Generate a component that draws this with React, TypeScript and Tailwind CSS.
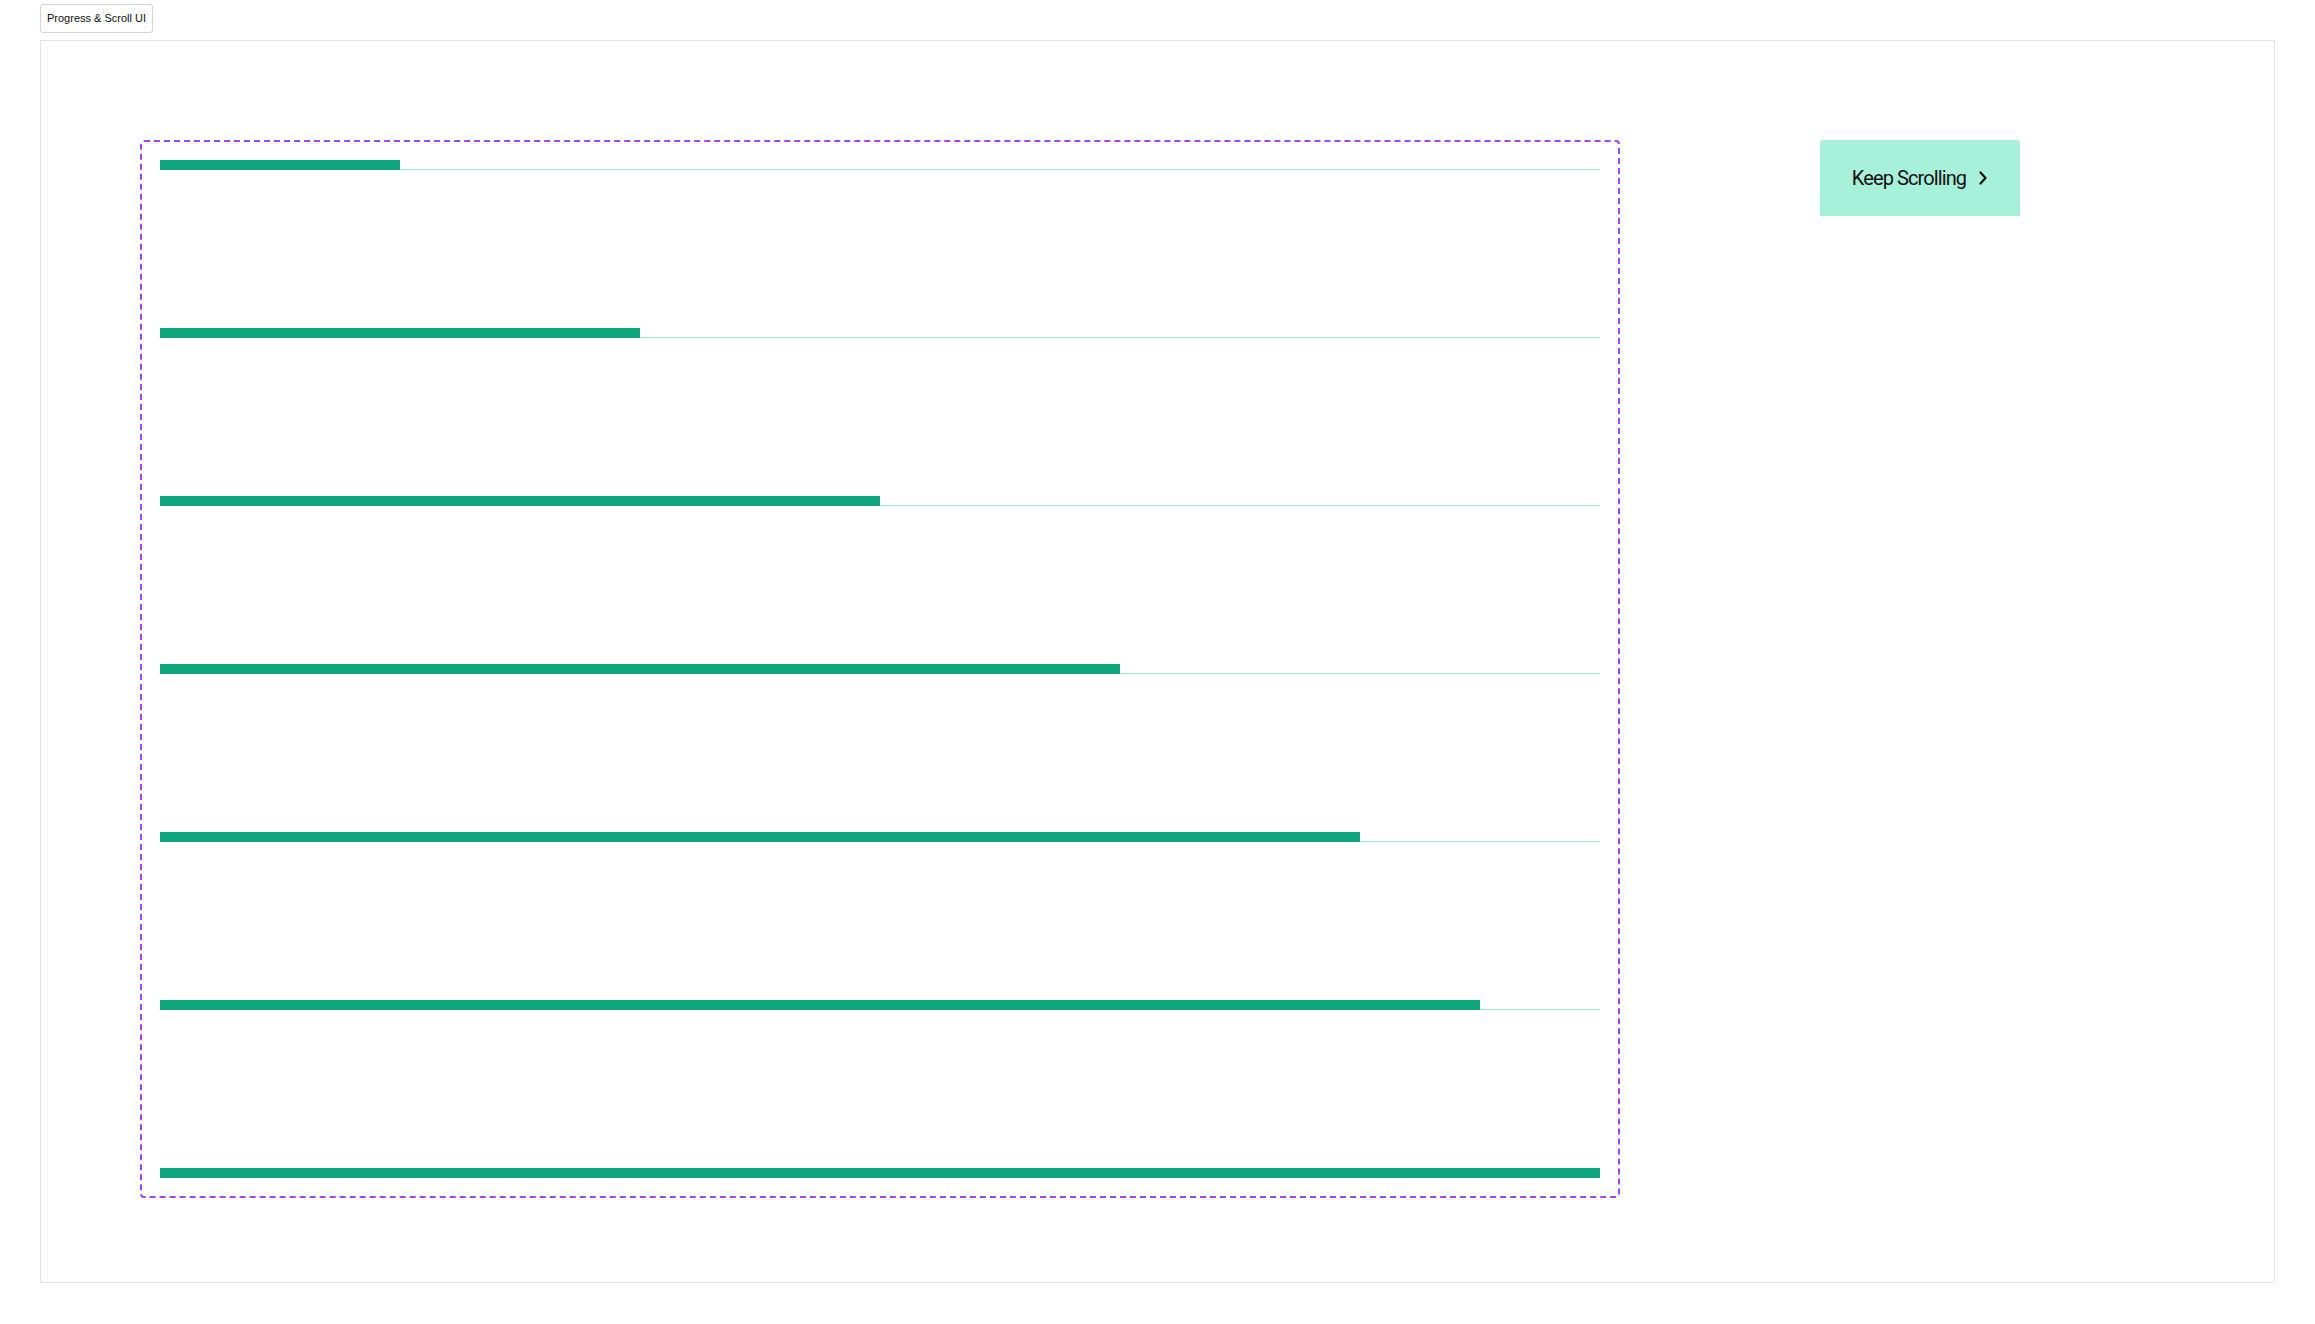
import React from 'react';

const progress = [240, 480, 720, 960, 1200, 1320, 1440];

const ProgressRow: React.FC<{ width: number }> = ({ width }) => (
  <div className="flex items-end h-[10px] w-full">
    <div className="h-[10px] bg-[#0ea47c] shrink-0" style={{ width }} />
    <div className="h-px flex-1 bg-[#a3dcc9]" />
  </div>
);

export default function App() {
  return (
    <div className="min-h-screen bg-white px-10 pt-1 font-['Liberation_Sans',Arial,sans-serif]">
      <div className="inline-flex items-center h-[29px] px-[6px] border border-[#d4d4d4] rounded-[3px] text-[11px] text-[#111]">
        Progress &amp; Scroll UI
      </div>

      <div className="mt-[7px] h-[1243px] border border-[#e5e5e5] pt-[99px] pl-[99px] flex items-start gap-[200px]">
        {/* scroll container */}
        <div className="w-[1480px] h-[1058px] border-2 border-dashed border-[#9a4af0] rounded-[4px] p-[18px] flex flex-col gap-[158px]">
          {progress.map((w, i) => (
            <ProgressRow key={i} width={w} />
          ))}
        </div>

        <button className="w-[200px] h-[76px] bg-[#a7f0da] rounded-t-[4px] flex items-center justify-center gap-3 text-[20px] font-normal tracking-[-0.045em] text-[#111] font-['Roboto',sans-serif]">
          Keep Scrolling
          <svg width="10" height="14" viewBox="0 0 10 14" fill="none" stroke="currentColor" strokeWidth="2.2" strokeLinecap="round" strokeLinejoin="round">
            <path d="M2.5 1.5 L7.5 7 L2.5 12.5" />
          </svg>
        </button>
      </div>
    </div>
  );
}
